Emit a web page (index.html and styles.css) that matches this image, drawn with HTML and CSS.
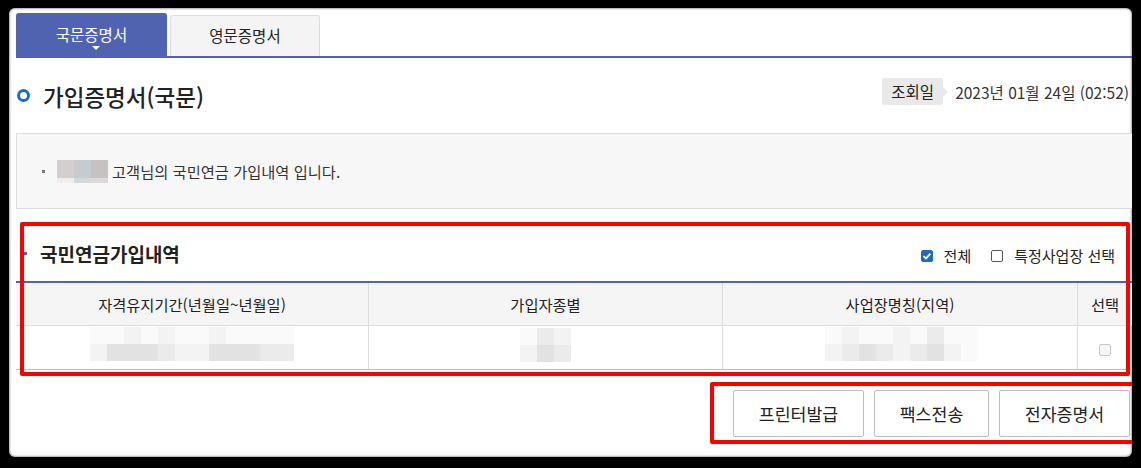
FILE: index.html
```html
<!DOCTYPE html>
<html lang="ko">
<head>
  <meta charset="UTF-8" />
  <title>가입증명서(국문)</title>
  <link rel="stylesheet" href="styles.css">
</head>
<body>
  <div class="sheet">
    <div class="tabs">
      <div class="tab active">국문증명서</div>
      <div class="tab">영문증명서</div>
    </div>

    <div class="title-row">
      <h2 class="page-title"><span class="ring"></span>가입증명서(국문)</h2>
      <div class="inquiry">
        <span class="badge">조회일</span>
        <span class="date">2023년 01월 24일 (02:52)</span>
      </div>
    </div>

    <div class="info-box">
      <span class="dot"></span>
      <span class="mosaic name">
        <i class="n1"></i><i class="n2"></i><i class="n3"></i>
        <i class="n4"></i><i class="n5"></i><i class="n6"></i>
      </span>
      <span class="info-text">고객님의 국민연금 가입내역 입니다.</span>
    </div>

    <div class="section-head">
      <h3 class="section-title">국민연금가입내역</h3>
      <div class="options">
        <label class="opt"><span class="box checked">
          <svg viewBox="0 0 12 12" width="12" height="12"><path d="M2.6 6.2 L5 8.5 L9.4 3.6" fill="none" stroke="#fff" stroke-width="1.8"/></svg>
        </span>전체</label>
        <label class="opt"><span class="box"></span>특정사업장 선택</label>
      </div>
    </div>

    <table class="grid">
      <thead>
        <tr>
          <th class="c1">자격유지기간(년월일~년월일)</th>
          <th class="c2">가입자종별</th>
          <th class="c3">사업장명칭(지역)</th>
          <th class="c4">선택</th>
        </tr>
      </thead>
      <tbody>
        <tr>
          <td><span class="mosaic rows w12">
            <i class="a"></i><i class="a"></i><i class="b"></i><i class="a"></i><i class="b"></i><i class="a"></i><i class="a"></i><i class="b"></i><i class="a"></i><i class="a"></i><i class="a"></i><i class="a"></i>
            <i class="b"></i><i class="d"></i><i class="d"></i><i class="d"></i><i class="c"></i><i class="b"></i><i class="b"></i><i class="d"></i><i class="d"></i><i class="d"></i><i class="c"></i><i class="c"></i>
          </span></td>
          <td><span class="mosaic rows w3">
            <i class="a"></i><i class="c"></i><i class="b"></i>
            <i class="b"></i><i class="d"></i><i class="c"></i>
          </span></td>
          <td><span class="mosaic rows w9">
            <i class="a"></i><i class="b"></i><i class="a"></i><i class="a"></i><i class="b"></i><i class="a"></i><i class="c"></i><i class="a"></i><i class="a"></i>
            <i class="b"></i><i class="c"></i><i class="d"></i><i class="c"></i><i class="b"></i><i class="c"></i><i class="d"></i><i class="b"></i><i class="a"></i>
          </span></td>
          <td><span class="box disabled"></span></td>
        </tr>
      </tbody>
    </table>

    <div class="actions">
      <button class="btn btn-wide">프린터발급</button>
      <button class="btn">팩스전송</button>
      <button class="btn btn-wide">전자증명서</button>
    </div>

    <div class="mark mark-table"></div>
    <div class="mark mark-buttons"></div>
  </div>
</body>
</html>
```

FILE: styles.css
```css
html, body {
  margin: 0;
  background: #000;
}

body {
  padding: 8px 9px 11px 9px;
  font-family: "Noto Sans CJK KR", "Noto Sans", sans-serif;
  color: #222;
}

.sheet {
  position: relative;
  width: 1123px;
  height: 449px;
  box-sizing: border-box;
  padding: 5px 0 0 7px;
  background: #fff;
  border-radius: 6px;
  overflow: hidden;
  box-shadow: inset 0 0 2px 1px rgba(0, 0, 0, 0.35);
}

/* tabs */
.tabs {
  display: flex;
  align-items: flex-end;
  gap: 3px;
  border-bottom: 2px solid #4f63b0;
}

.tab {
  width: 150px;
  height: 41px;
  line-height: 39px;
  text-align: center;
  font-size: 15.5px;
  background: #f4f4f4;
  border: 1px solid #dcdcdc;
  border-bottom: none;
  border-radius: 3px 3px 0 0;
  box-sizing: border-box;
}

.tab.active {
  position: relative;
  width: 151px;
  height: 43px;
  line-height: 41px;
  background: #4f63b0;
  border-color: #4f63b0;
  color: #fff;
}

.tab.active::after {
  content: "";
  position: absolute;
  left: 75px;
  bottom: 6px;
  border-left: 4px solid transparent;
  border-right: 4px solid transparent;
  border-top: 4px solid #fff;
}

/* title */
.title-row {
  height: 75px;
  display: flex;
  align-items: center;
  justify-content: space-between;
}

.page-title {
  margin: 0;
  display: flex;
  align-items: center;
  gap: 13px;
  font-size: 22.5px;
  font-weight: 500;
  line-height: 30px;
  color: #222;
}

.ring {
  width: 13px;
  height: 13px;
  margin-left: 1px;
  border: 3.5px solid #1b6cc1;
  border-radius: 50%;
  box-sizing: border-box;
}

.inquiry {
  display: flex;
  align-items: center;
  gap: 12px;
  margin-bottom: 8px;
  margin-right: 3px;
  font-size: 15.5px;
}

.badge {
  position: relative;
  width: 61px;
  height: 27px;
  line-height: 27px;
  text-align: center;
  background: #e9e9e9;
  border-radius: 2px;
  color: #222;
}

.badge::after {
  content: "";
  position: absolute;
  right: -5px;
  top: 9px;
  border-top: 5px solid transparent;
  border-bottom: 5px solid transparent;
  border-left: 5px solid #e9e9e9;
}

.date {
  color: #333;
}

/* info box */
.info-box {
  height: 76px;
  box-sizing: border-box;
  display: flex;
  align-items: center;
  padding-left: 25px;
  background: #f7f7f7;
  border: 1px solid #dcdcdc;
  border-right: none;
  font-size: 15.3px;
  color: #333;
}

.dot {
  width: 3px;
  height: 3px;
  background: #777;
  margin-right: 12px;
}

.mosaic {
  display: grid;
}

.mosaic i {
  display: block;
}

.mosaic.name {
  grid-template-columns: repeat(3, 17px);
  grid-template-rows: 18px 5px;
  margin-right: 4px;
}

.n1 { background: #d4cfce; }
.n2 { background: #c5ccce; }
.n3 { background: #c6c2c1; }
.n4 { background: #f1eded; }
.n5 { background: #d3d8da; }
.n6 { background: #dcdad9; }

/* section */
.section-head {
  position: relative;
  height: 72px;
  box-sizing: border-box;
  display: flex;
  align-items: flex-end;
  justify-content: space-between;
  padding: 0 17px 14px 24px;
}

.section-head::before {
  content: "";
  position: absolute;
  left: 8px;
  bottom: 26px;
  width: 3px;
  height: 3px;
  background: #4f63b0;
}

.section-title {
  margin: 0;
  font-size: 19px;
  font-weight: 700;
  line-height: 26px;
  color: #222;
}

.options {
  display: flex;
  gap: 20px;
  font-size: 15px;
  line-height: 20px;
  margin-bottom: 1px;
}

.opt {
  display: flex;
  align-items: center;
  gap: 11px;
}

.box {
  display: inline-block;
  width: 12px;
  height: 12px;
  box-sizing: border-box;
  border: 1px solid #555;
  border-radius: 2px;
  background: #fff;
}

.box.checked {
  border-color: #1b6cc1;
  background: #1b6cc1;
  position: relative;
}

.box.checked svg {
  position: absolute;
  left: -1px;
  top: -1px;
}

.box.disabled {
  border-color: #c8c8c8;
  background: #f6f6f6;
  vertical-align: middle;
}

/* table */
.grid {
  width: 1116px;
  border-collapse: collapse;
  table-layout: fixed;
  border-top: 2px solid #4f63b0;
  font-size: 15.3px;
}

.grid th {
  height: 42px;
  padding: 0;
  font-weight: 400;
  background: #f5f5f5;
  color: #222;
  border-bottom: 1px solid #dcdcdc;
  border-left: 1px solid #dcdcdc;
}

.grid th:first-child,
.grid td:first-child {
  border-left: none;
}

.grid .c1 { width: 352px; }
.grid .c2 { width: 353px; }
.grid .c3 { width: 354px; }

.grid td {
  height: 43px;
  padding: 0;
  text-align: center;
  border-left: 1px solid #dcdcdc;
  border-bottom: 1px solid #bbb;
}

.mosaic.rows {
  display: inline-grid;
  grid-auto-rows: 17px;
  vertical-align: middle;
}

.mosaic.w12 { grid-template-columns: repeat(12, 17px); margin-top: -9px; }
.mosaic.w3 { grid-template-columns: repeat(3, 17px); margin-top: -5px; }
.mosaic.w9 { grid-template-columns: repeat(9, 17px); margin-top: -9px; margin-left: 2px; }

.mosaic .a { background: #fafafa; }
.mosaic .b { background: #f3f3f3; }
.mosaic .c { background: #ebebec; }
.mosaic .d { background: #e2e2e2; }

/* buttons */
.actions {
  display: flex;
  justify-content: flex-end;
  gap: 10px;
  margin-top: 20px;
  padding-right: 2px;
}

.btn {
  width: 115px;
  height: 47px;
  font-family: inherit;
  font-size: 17.3px;
  color: #222;
  background: #fff;
  border: 1px solid #bdbdbd;
  border-radius: 2px;
  cursor: pointer;
}

.btn-wide {
  width: 131px;
}

/* annotation marks */
.mark {
  position: absolute;
  border: 4px solid #ff0000;
  border-radius: 2px;
  box-sizing: border-box;
}

.mark-table {
  left: 11px;
  top: 214px;
  width: 1110px;
  height: 154px;
}

.mark-buttons {
  left: 701px;
  top: 374px;
  width: 440px;
  height: 62px;
}
```
